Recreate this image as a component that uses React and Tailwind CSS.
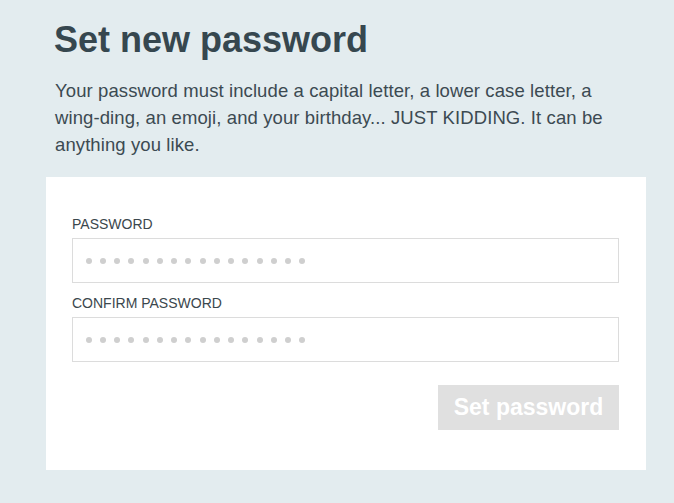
import React from "react";

function Dots() {
  return (
    <div className="flex items-center gap-[8.27px]">
      {Array.from({ length: 16 }).map((_, i) => (
        <span key={i} className="block w-[6px] h-[6px] rounded-full bg-[#cfcfcf]" />
      ))}
    </div>
  );
}

function Field({ label, className = "" }) {
  return (
    <div className={className}>
      <div className="text-[14px] leading-[16px] text-[#3b474d] uppercase">{label}</div>
      <div className="mt-[6px] h-[45px] border border-[#dcdcdc] bg-white flex items-center pl-[12.5px]">
        <Dots />
      </div>
    </div>
  );
}

export default function App() {
  return (
    <div
      className="w-[674px] h-[503px] bg-[#e3ecef] overflow-hidden"
      style={{ fontFamily: '"Liberation Sans", Arial, sans-serif' }}
    >
      <div className="pl-[54px] pt-[20px]">
        <h1 className="text-[36px] leading-[40px] font-bold text-[#36474f]">Set new password</h1>
        <p className="mt-[17px] w-[560px] pl-[1px] text-[18.5px] leading-[27px] text-[#3c4a52] tracking-[0.1px]">
          Your password must include a capital letter, a lower case letter, a wing-ding, an emoji, and your birthday... JUST KIDDING. It can be anything you like.
        </p>
      </div>
      <div className="ml-[46px] mt-[19px] w-[600px] bg-white pl-[26px] pr-[27px] pt-[39px] pb-[40px]">
        <Field label="Password" />
        <Field label="Confirm password" className="mt-[12px]" />
        <div className="mt-[23px] flex justify-end">
          <button className="w-[181px] h-[45px] bg-[#e0e0e0] text-white text-[23px] font-bold leading-none">
            Set password
          </button>
        </div>
      </div>
    </div>
  );
}
